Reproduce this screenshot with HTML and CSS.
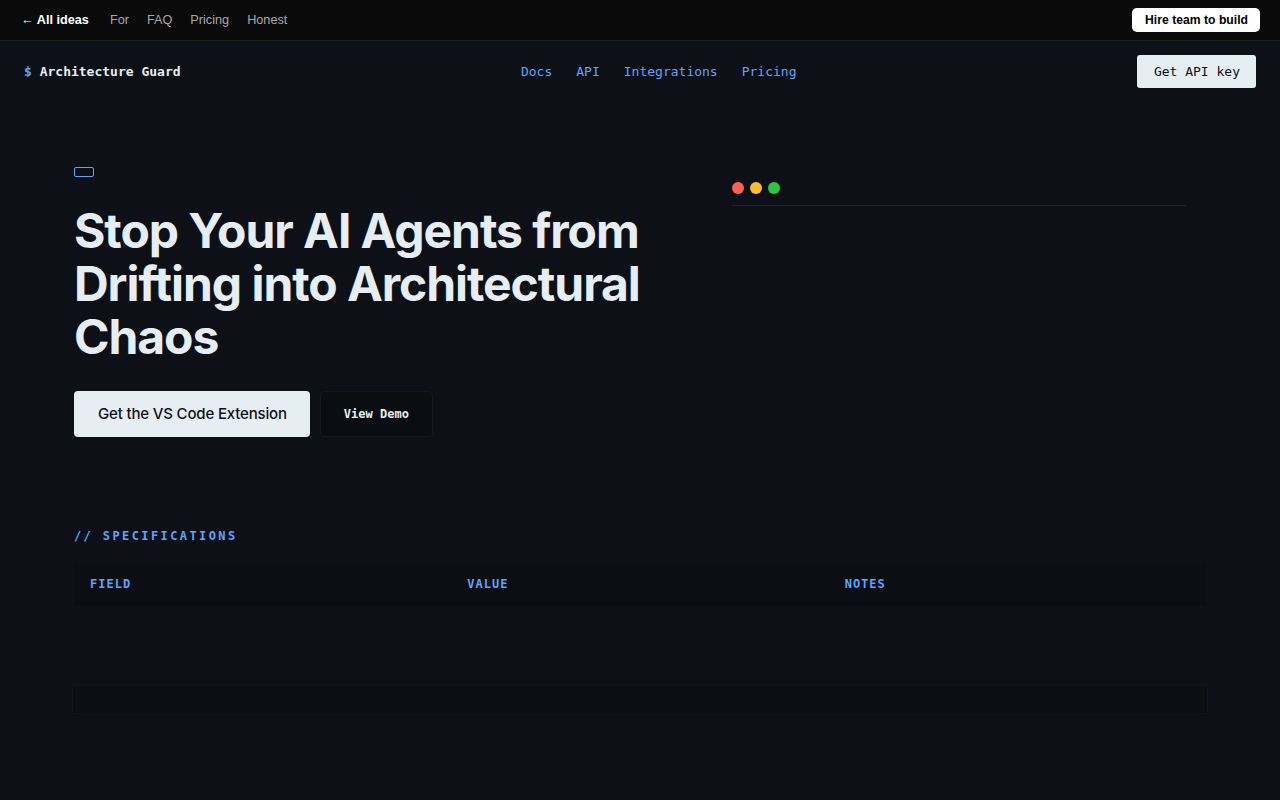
FILE: index.html
```html
<!DOCTYPE html>
<html lang="en">
<head>
<meta charset="utf-8">
<title>Architecture Guard</title>
<link rel="stylesheet" href="styles.css">
</head>
<body>
<div class="topbar">
  <div class="topbar-links">
    <a class="back" href="#">← All ideas</a>
    <a href="#">For</a>
    <a href="#">FAQ</a>
    <a href="#">Pricing</a>
    <a href="#">Honest</a>
  </div>
  <a class="hire" href="#">Hire team to build</a>
</div>

<nav class="nav">
  <div class="brand"><span class="dollar">$</span> Architecture Guard</div>
  <div class="nav-links">
    <a href="#">Docs</a>
    <a href="#">API</a>
    <a href="#">Integrations</a>
    <a href="#">Pricing</a>
  </div>
  <a class="api-btn" href="#">Get API key</a>
</nav>

<main class="container">
  <section class="hero">
    <div class="hero-left">
      <span class="badge"></span>
      <h1>Stop Your AI Agents from Drifting into Architectural Chaos</h1>
      <div class="actions">
        <a class="btn-primary" href="#">Get the VS Code Extension</a>
        <a class="btn-ghost" href="#">View Demo</a>
      </div>
    </div>
    <div class="window">
      <div class="window-head">
        <span class="dot red"></span>
        <span class="dot yellow"></span>
        <span class="dot green"></span>
      </div>
    </div>
  </section>

  <section class="specs">
    <h2 class="label">// SPECIFICATIONS</h2>
    <div class="table">
      <div class="thead">
        <div class="th">FIELD</div>
        <div class="th">VALUE</div>
        <div class="th">NOTES</div>
      </div>
      <div class="tbody"></div>
    </div>
    <div class="table-foot"></div>
  </section>
</main>
</body>
</html>
```

FILE: styles.css
```css
* { box-sizing: border-box; }
html, body { margin: 0; padding: 0; }
body {
  background: #0d1117;
  color: #e6edf3;
  font-family: "Liberation Sans", Arial, sans-serif;
  min-height: 800px;
}
a { text-decoration: none; color: inherit; }

.topbar {
  height: 41px;
  background: #0a0a0a;
  border-bottom: 1px solid #1f1f1f;
  display: flex;
  align-items: center;
  justify-content: space-between;
  padding: 0 20px 0 21px;
  font-size: 12.7px;
  line-height: 15px;
}
.topbar-links { display: flex; gap: 18px; align-items: center; margin-top: 1px; }
.topbar-links a { color: #a8a8a8; }
.topbar-links .back { color: #ffffff; font-weight: 700; margin-right: 3px; }
.hire {
  background: #ffffff;
  color: #000000;
  font-weight: 700;
  font-size: 12.2px;
  border-radius: 5px;
  height: 24px;
  line-height: 24px;
  padding: 0 12px 0 13px;
}

.nav {
  display: flex;
  align-items: center;
  justify-content: space-between;
  padding: 14px 24px 14px 24px;
  font-family: "DejaVu Sans Mono", monospace;
  font-size: 13px;
}
.brand { font-weight: 700; color: #e6edf3; }
.brand .dollar { color: #58a6ff; }
.nav-links { display: flex; gap: 24px; }
.nav-links a { color: #58a6ff; }
.api-btn {
  background: #e6edf3;
  color: #0d1117;
  border-radius: 3px;
  height: 33px;
  line-height: 33px;
  padding: 0 16px 0 17px;
}

.container {
  max-width: 1132px;
  margin: 0 auto;
}

.hero {
  display: grid;
  grid-template-columns: 1fr 494px;
  gap: 48px;
  padding-top: 64px;
}
.badge {
  display: block;
  width: 20px;
  height: 10px;
  border: 1px solid #58a6ff;
  border-radius: 2px;
  margin-top: 1px;
}
h1 {
  font-family: Inter, "Liberation Sans", sans-serif;
  font-weight: 700;
  font-size: 48px;
  line-height: 53px;
  letter-spacing: -0.022em;
  color: #e6edf3;
  margin: 27px 0 0 0;
}
.actions {
  display: flex;
  gap: 10px;
  margin-top: 28px;
}
.btn-primary {
  background: #e6edf3;
  color: #0d1117;
  font-family: Inter, "Liberation Sans", sans-serif;
  font-weight: 500;
  font-size: 15px;
  letter-spacing: -0.011em;
  height: 46px;
  line-height: 46px;
  padding: 0 23px 0 24px;
  border-radius: 4px;
}
.btn-ghost {
  background: #0a0d12;
  border: 1px solid #141820;
  color: #e6edf3;
  font-family: "DejaVu Sans Mono", monospace;
  font-weight: 700;
  font-size: 12px;
  height: 46px;
  line-height: 44px;
  padding: 0 23px;
  border-radius: 4px;
}

.window {
  padding: 16px 20px 20px 20px;
  align-self: start;
}
.window-head {
  display: flex;
  gap: 6px;
  padding-bottom: 11px;
  border-bottom: 1px solid #21262d;
}
.dot { width: 12px; height: 12px; border-radius: 50%; }
.red { background: #ff5f57; }
.yellow { background: #febc2e; }
.green { background: #28c840; }

.specs { margin-top: 92px; }
.label {
  font-family: "DejaVu Sans Mono", monospace;
  font-size: 12px;
  font-weight: 700;
  letter-spacing: 0.2em;
  color: #58a6ff;
  margin: 0;
  line-height: 14px;
}
.table { margin-top: 20px; }
.thead {
  display: grid;
  grid-template-columns: repeat(3, 1fr);
  background: #0b0e13;
  border-bottom: 1px solid #0f1319;
}
.th {
  font-family: "DejaVu Sans Mono", monospace;
  font-size: 12px;
  font-weight: 700;
  letter-spacing: 1px;
  color: #58a6ff;
  padding: 14px 16px;
  line-height: 15px;
}
.tbody { height: 78px; }
.table-foot {
  height: 29px;
  background: #0b0e13;
  border: 1px solid #10141a;
  margin: 0 -2px;
}
```
